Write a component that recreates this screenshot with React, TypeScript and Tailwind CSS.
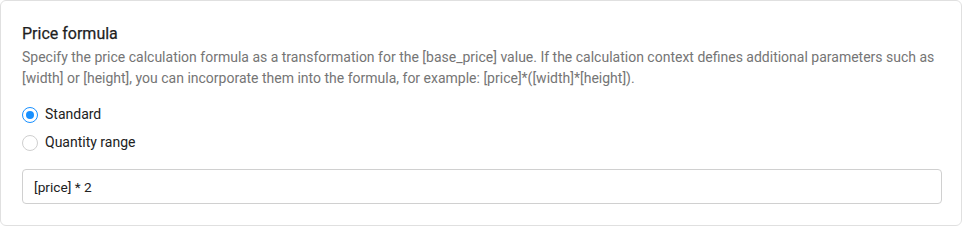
import React, { useState } from "react";

export default function App() {
  const [mode, setMode] = useState("standard");
  return (
    <div className="w-[962px] h-[226px] bg-white p-0" style={{ fontFamily: "Roboto, 'Liberation Sans', sans-serif" }}>
      <div className="h-[226px] w-[962px] rounded-[6px] border border-[#e0e0e0] bg-white px-[21px] pt-[22px]">
        <h2 className="text-[16px] leading-[22px] font-normal text-[#1f1f1f] [-webkit-text-stroke:0.25px_#1f1f1f]">Price formula</h2>
        <p className="mt-[2px] text-[14px] leading-[21px] text-[#757575]">
          Specify the price calculation formula as a transformation for the [base_price] value. If the calculation context defines additional parameters such as [width] or [height], you can incorporate them into the formula, for example: [price]*([width]*[height]).
        </p>
        <div className="mt-[15px] flex flex-col gap-[7px]">
          {[
            { id: "standard", label: "Standard" },
            { id: "range", label: "Quantity range" },
          ].map((o) => {
            const sel = mode === o.id;
            return (
              <label key={o.id} className="flex h-[21px] cursor-pointer items-center gap-[7px]" onClick={() => setMode(o.id)}>
                <span
                  className={
                    sel
                      ? "flex h-[16px] w-[16px] items-center justify-center rounded-full border border-[#1890ff] bg-white"
                      : "flex h-[16px] w-[16px] items-center justify-center rounded-full border border-[#cfcfcf] bg-white"
                  }
                >
                  {sel && <span className="h-[8px] w-[8px] rounded-full bg-[#1890ff]" />}
                </span>
                <span className="text-[14px] text-[#212121]">{o.label}</span>
              </label>
            );
          })}
        </div>
        <input
          defaultValue="[price] * 2"
          className="mt-[16px] h-[35px] w-[920px] rounded-[4px] border border-[#d0d0d0] px-[11px] text-[13.7px] text-[#212121] outline-none"
          style={{ fontFamily: "Roboto, 'Liberation Sans', sans-serif" }}
        />
      </div>
    </div>
  );
}
